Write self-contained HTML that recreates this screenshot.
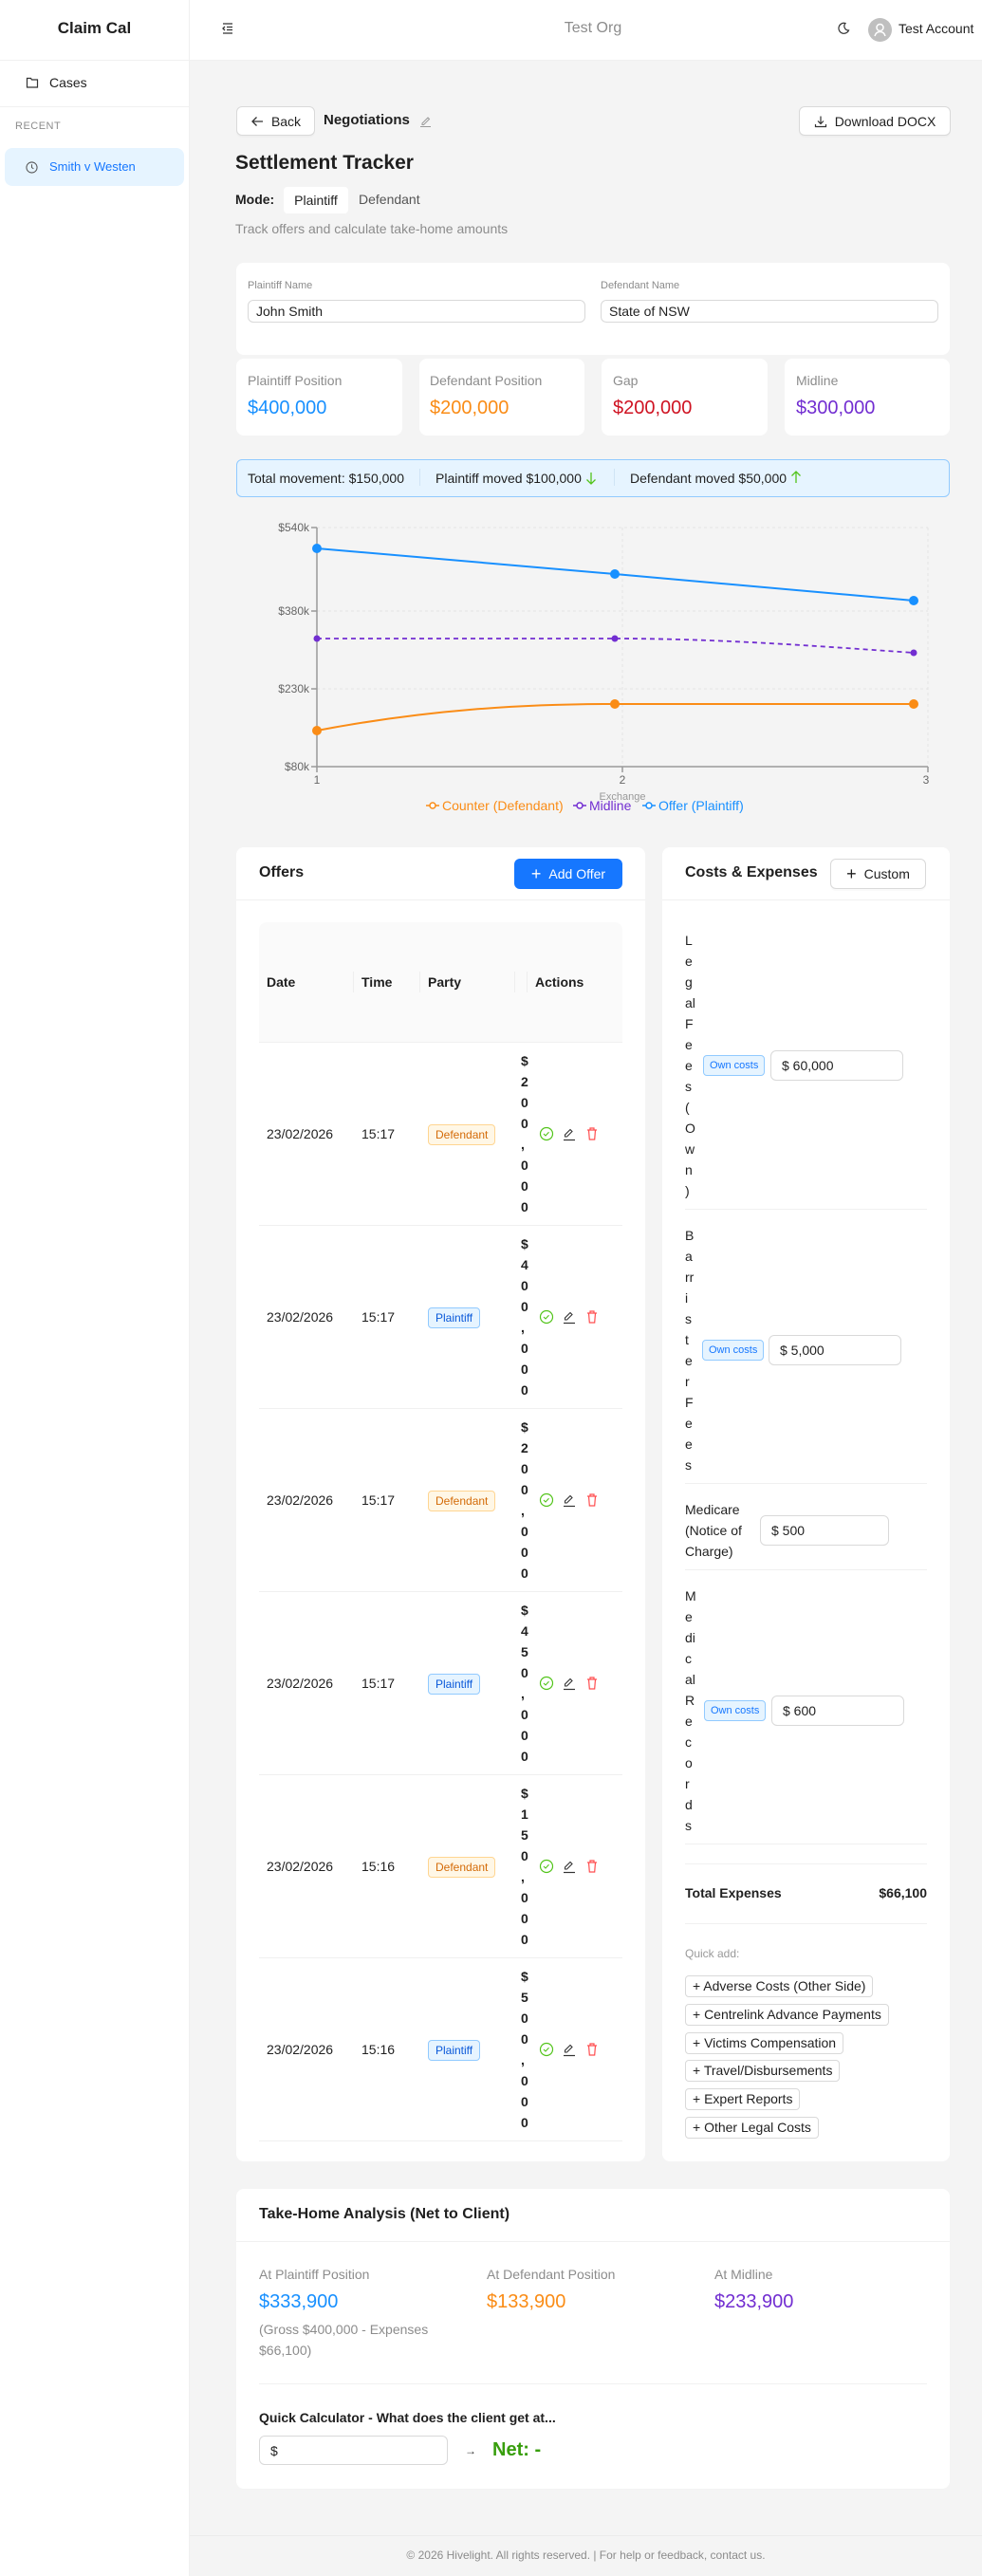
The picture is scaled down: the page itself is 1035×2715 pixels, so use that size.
<!DOCTYPE html>
<html><head><meta charset="utf-8"><style>
*{box-sizing:border-box;margin:0;padding:0}
html,body{width:1035px;height:2715px;overflow:hidden}
body{font-family:"Liberation Sans",Arial,sans-serif;background:#f4f4f4;color:#1f1f1f;position:relative;font-size:14px}
.a{position:absolute}
.card{position:absolute;background:#fff;border-radius:8px}
.btn{position:absolute;background:#fff;border:1px solid #d9d9d9;border-radius:6px;display:flex;align-items:center;justify-content:center;font-size:14px;color:#1f1f1f;box-shadow:0 2px 0 rgba(0,0,0,.02)}
.lbl{font-size:14px;color:#8c8c8c}
.inp{position:absolute;border:1px solid #d9d9d9;border-radius:6px;background:#fff;font-size:14px;display:flex;align-items:center;padding-left:11px}
.badge{position:absolute;font-size:12px;border-radius:4px;padding:0 7px;height:22px;line-height:20px}
.def{background:#fff7e6;border:1px solid #ffd591;color:#d46b08}
.pl{background:#e6f4ff;border:1px solid #91caff;color:#0958d9}
.own{font-size:11px;background:#e6f4ff;border:1px solid #91caff;color:#1677ff;border-radius:4px;height:22px;line-height:20px;padding:0 6px;position:absolute}
.amt{position:absolute;font-weight:bold;width:1px;word-break:break-all;line-height:22px;font-size:14px}
.vl{position:absolute;line-height:22px;font-size:14px;white-space:nowrap}
.hr{position:absolute;height:1px;background:#f0f0f0}
.qa{position:absolute;left:722px;height:23px;border:1px solid #d9d9d9;border-radius:4px;font-size:14px;line-height:21px;padding:0 7px;white-space:nowrap}
</style></head><body>
<div class="a" style="left:0;top:0;width:1035px;height:64px;background:#fff;border-bottom:1px solid #f0f0f0"></div>
<div class="a" style="left:199px;top:0;width:1px;height:2715px;background:#f0f0f0"></div>
<div class="a" style="left:0;top:64px;width:199px;height:2651px;background:#fff"></div>
<div class="a" style="left:0;top:20px;width:199px;text-align:center;font-weight:bold;font-size:17px">Claim Cal</div>
<svg class="a" style="left:233px;top:23px" width="14" height="14" viewBox="0 0 14 14" fill="none" stroke="#333" stroke-width="1.3"><path d="M2 2h10M6 5.5h6M6 8.5h6M2 12h10M4 5L2 7l2 2"/></svg>
<div class="a" style="left:560px;top:21px;width:130px;text-align:center;font-size:16px;color:#8c8c8c">Test Org</div>
<svg class="a" style="left:882px;top:23px" width="14" height="14" viewBox="0 0 14 14" fill="none" stroke="#333" stroke-width="1.2"><path d="M9 1.5A5.5 5.5 0 1 0 12.5 9 4.5 4.5 0 0 1 9 1.5z"/></svg>
<div class="a" style="left:915px;top:19px;width:25px;height:25px;border-radius:50%;background:#bfbfbf"></div>
<svg class="a" style="left:915px;top:19px" width="25" height="25" viewBox="0 0 25 25" fill="none" stroke="#fff" stroke-width="1.5"><circle cx="12.5" cy="10" r="3.5"/><path d="M7 19c1-3.5 3-4.5 5.5-4.5S17 15.5 18 19"/></svg>
<div class="a" style="left:947px;top:22px;font-size:14px">Test Account</div>
<svg class="a" style="left:27px;top:80px" width="14" height="14" viewBox="0 0 14 14" fill="none" stroke="#333" stroke-width="1.2"><path d="M1.5 2.5h4l1 1.5h6v8h-11z"/></svg>
<div class="a" style="left:52px;top:79px;font-size:14px">Cases</div>
<div class="a" style="left:0;top:112px;width:199px;height:1px;background:#f0f0f0"></div>
<div class="a" style="left:16px;top:127px;font-size:11px;color:#8c8c8c;letter-spacing:.5px">RECENT</div>
<div class="a" style="left:5px;top:156px;width:189px;height:40px;background:#e6f4ff;border-radius:8px"></div>
<svg class="a" style="left:27px;top:170px" width="13" height="13" viewBox="0 0 14 14" fill="none" stroke="#555" stroke-width="1.1"><circle cx="7" cy="7" r="6"/><path d="M7 3.5V7l2 1.5"/></svg>
<div class="a" style="left:52px;top:168px;font-size:13px;color:#1677ff">Smith v Westen</div>
<div class="btn" style="left:249px;top:112px;width:83px;height:31px"><svg width="14" height="14" viewBox="0 0 14 14" fill="none" stroke="#333" stroke-width="1.3" style="margin-right:8px"><path d="M13 7H2M6.5 2.5L2 7l4.5 4.5"/></svg>Back</div>
<div class="a" style="left:341px;top:118px;font-weight:bold;font-size:15px">Negotiations</div>
<svg class="a" style="left:442px;top:121px" width="13" height="13" viewBox="0 0 13 13" fill="none" stroke="#999" stroke-width="1"><path d="M3 9l6-6 1.5 1.5-6 6H3zM1 12.5h11"/></svg>
<div class="btn" style="left:842px;top:112px;width:160px;height:31px"><svg width="14" height="14" viewBox="0 0 14 14" fill="none" stroke="#333" stroke-width="1.2" style="margin-right:8px"><path d="M7 1.5v8M4 6.5l3 3 3-3M1.5 10v2.5h11V10"/></svg>Download DOCX</div>
<div class="a" style="left:248px;top:160px;font-weight:bold;font-size:21px">Settlement Tracker</div>
<div class="a" style="left:248px;top:202px;font-weight:bold;font-size:14px">Mode:</div>
<div class="a" style="left:299px;top:197px;width:68px;height:28px;background:#fff;border-radius:4px;text-align:center;line-height:28px;font-size:14px">Plaintiff</div>
<div class="a" style="left:378px;top:202px;font-size:14px;color:#555">Defendant</div>
<div class="a" style="left:248px;top:233px;font-size:14px;color:#8c8c8c">Track offers and calculate take-home amounts</div>
<div class="card" style="left:249px;top:277px;width:752px;height:97px"></div>
<div class="a" style="left:261px;top:295px;font-size:11px;color:#8c8c8c">Plaintiff Name</div>
<div class="a" style="left:633px;top:295px;font-size:11px;color:#8c8c8c">Defendant Name</div>
<div class="inp" style="left:261px;top:316px;width:356px;height:24px;padding-left:8px">John Smith</div>
<div class="inp" style="left:633px;top:316px;width:356px;height:24px;padding-left:8px">State of NSW</div>
<div class="card" style="left:249px;top:378px;width:175px;height:81px"></div>
<div class="card" style="left:442px;top:378px;width:174px;height:81px"></div>
<div class="card" style="left:634px;top:378px;width:175px;height:81px"></div>
<div class="card" style="left:827px;top:378px;width:174px;height:81px"></div>
<div class="a lbl" style="left:261px;top:393px">Plaintiff Position</div>
<div class="a lbl" style="left:453px;top:393px">Defendant Position</div>
<div class="a lbl" style="left:646px;top:393px">Gap</div>
<div class="a lbl" style="left:839px;top:393px">Midline</div>
<div class="a" style="left:261px;top:419px;font-size:20px;color:#1890ff">$400,000</div>
<div class="a" style="left:453px;top:419px;font-size:20px;color:#fa8c16">$200,000</div>
<div class="a" style="left:646px;top:419px;font-size:20px;color:#cf1322">$200,000</div>
<div class="a" style="left:839px;top:419px;font-size:20px;color:#722ed1">$300,000</div>
<div class="a" style="left:249px;top:484px;width:752px;height:40px;background:#e6f4ff;border:1px solid #91caff;border-radius:6px"></div>
<div class="a" style="left:261px;top:496px;font-size:14px">Total movement: $150,000</div>
<div class="a" style="left:442px;top:494px;width:1px;height:18px;background:#d0e4f5"></div>
<div class="a" style="left:459px;top:496px;font-size:14px">Plaintiff moved $100,000</div>
<svg class="a" style="left:617px;top:497px" width="12" height="14" viewBox="0 0 12 14" fill="none" stroke="#52c41a" stroke-width="1.3"><path d="M6 1v12M1.5 8.5L6 13l4.5-4.5"/></svg>
<div class="a" style="left:647px;top:494px;width:1px;height:18px;background:#d0e4f5"></div>
<div class="a" style="left:664px;top:496px;font-size:14px">Defendant moved $50,000</div>
<svg class="a" style="left:833px;top:496px" width="12" height="14" viewBox="0 0 12 14" fill="none" stroke="#52c41a" stroke-width="1.3"><path d="M6 13V1M1.5 5.5L6 1l4.5 4.5"/></svg>
<svg class="a" style="left:0;top:540px" width="1035" height="330" viewBox="0 540 1035 330" font-family="Liberation Sans, Arial, sans-serif">
<g stroke="#e3e3e3" stroke-dasharray="3 3" stroke-width="1"><path d="M334 556H978M334 644H978M334 726H978M656 556V808M978 556V808"/></g>
<g stroke="#999" stroke-width="1.5" fill="none"><path d="M334 556V808H978"/><path d="M328 556h6M328 644h6M328 726h6M328 808h6M334 808v6M656 808v6M978 808v6"/></g>
<g font-size="12" fill="#666" text-anchor="end"><text x="326" y="560">$540k</text><text x="326" y="648">$380k</text><text x="326" y="730">$230k</text><text x="326" y="812">$80k</text></g>
<g font-size="12" fill="#666" text-anchor="middle"><text x="334" y="826">1</text><text x="656" y="826">2</text><text x="976" y="826">3</text></g>
<text x="656" y="843" font-size="11" fill="#999" text-anchor="middle">Exchange</text>
<path d="M334 578L648 605L963 633" stroke="#1890ff" stroke-width="2" fill="none"/>
<g fill="#1890ff"><circle cx="334" cy="578" r="5"/><circle cx="648" cy="605" r="5"/><circle cx="963" cy="633" r="5"/></g>
<path d="M334 673L648 673C750 673 850 680 963 688" stroke="#722ed1" stroke-width="1.8" stroke-dasharray="5 4" fill="none"/>
<g fill="#722ed1"><circle cx="334" cy="673" r="3.5"/><circle cx="648" cy="673" r="3.5"/><circle cx="963" cy="688" r="3.5"/></g>
<path d="M334 770C450 748 550 742 648 742L963 742" stroke="#fa8c16" stroke-width="2" fill="none"/>
<g fill="#fa8c16"><circle cx="334" cy="770" r="5"/><circle cx="648" cy="742" r="5"/><circle cx="963" cy="742" r="5"/></g>
<g font-size="14">
<path d="M449 849h14" stroke="#fa8c16" stroke-width="1.5"/><circle cx="456" cy="849" r="3" fill="#fff" stroke="#fa8c16" stroke-width="1.5"/><text x="466" y="854" fill="#fa8c16">Counter (Defendant)</text>
<path d="M604 849h14" stroke="#722ed1" stroke-width="1.5"/><circle cx="611" cy="849" r="3" fill="#fff" stroke="#722ed1" stroke-width="1.5"/><text x="621" y="854" fill="#722ed1">Midline</text>
<path d="M677 849h14" stroke="#1890ff" stroke-width="1.5"/><circle cx="684" cy="849" r="3" fill="#fff" stroke="#1890ff" stroke-width="1.5"/><text x="694" y="854" fill="#1890ff">Offer (Plaintiff)</text>
</g>
</svg>
<div class="card" style="left:249px;top:893px;width:431px;height:1385px"></div>
<div class="a" style="left:249px;top:948px;width:431px;height:1px;background:#f0f0f0"></div>
<div class="a" style="left:273px;top:911px;font-weight:bold;font-size:16px">Offers</div>
<div class="a" style="left:542px;top:905px;width:114px;height:32px;background:#1677ff;border-radius:6px;color:#fff;font-size:14px;display:flex;align-items:center;justify-content:center"><span style="font-size:18px;margin-right:8px;line-height:1">+</span>Add Offer</div>
<div class="a" style="left:273px;top:972px;width:383px;height:127px;background:#fafafa;border-radius:8px 8px 0 0;border-bottom:1px solid #f0f0f0"></div>
<div class="a" style="left:281px;top:1027px;font-weight:bold">Date</div>
<div class="a" style="left:372px;top:1024px;width:1px;height:22px;background:#eee"></div>
<div class="a" style="left:381px;top:1027px;font-weight:bold">Time</div>
<div class="a" style="left:442px;top:1024px;width:1px;height:22px;background:#eee"></div>
<div class="a" style="left:451px;top:1027px;font-weight:bold">Party</div>
<div class="a" style="left:542px;top:1024px;width:1px;height:22px;background:#eee"></div>
<div class="a" style="left:555px;top:1024px;width:1px;height:22px;background:#eee"></div>
<div class="a" style="left:564px;top:1027px;font-weight:bold">Actions</div>
<div class="a" style="left:0;top:1099px">
 <div class="a" style="left:281px;top:88px;width:100px">23/02/2026</div><div class="a" style="left:381px;top:88px">15:17</div>
 <div class="badge def" style="left:451px;top:86px">Defendant</div>
 <div class="amt" style="left:549px;top:8px">$<br>2<br>0<br>0<br>,<br>0<br>0<br>0</div>
</div>
<div class="a" style="left:0;top:1292px">
 <div class="a" style="left:281px;top:88px;width:100px">23/02/2026</div><div class="a" style="left:381px;top:88px">15:17</div>
 <div class="badge pl" style="left:451px;top:86px">Plaintiff</div>
 <div class="amt" style="left:549px;top:8px">$<br>4<br>0<br>0<br>,<br>0<br>0<br>0</div>
</div>
<div class="a" style="left:0;top:1485px">
 <div class="a" style="left:281px;top:88px;width:100px">23/02/2026</div><div class="a" style="left:381px;top:88px">15:17</div>
 <div class="badge def" style="left:451px;top:86px">Defendant</div>
 <div class="amt" style="left:549px;top:8px">$<br>2<br>0<br>0<br>,<br>0<br>0<br>0</div>
</div>
<div class="a" style="left:0;top:1678px">
 <div class="a" style="left:281px;top:88px;width:100px">23/02/2026</div><div class="a" style="left:381px;top:88px">15:17</div>
 <div class="badge pl" style="left:451px;top:86px">Plaintiff</div>
 <div class="amt" style="left:549px;top:8px">$<br>4<br>5<br>0<br>,<br>0<br>0<br>0</div>
</div>
<div class="a" style="left:0;top:1871px">
 <div class="a" style="left:281px;top:88px;width:100px">23/02/2026</div><div class="a" style="left:381px;top:88px">15:16</div>
 <div class="badge def" style="left:451px;top:86px">Defendant</div>
 <div class="amt" style="left:549px;top:8px">$<br>1<br>5<br>0<br>,<br>0<br>0<br>0</div>
</div>
<div class="a" style="left:0;top:2064px">
 <div class="a" style="left:281px;top:88px;width:100px">23/02/2026</div><div class="a" style="left:381px;top:88px">15:16</div>
 <div class="badge pl" style="left:451px;top:86px">Plaintiff</div>
 <div class="amt" style="left:549px;top:8px">$<br>5<br>0<br>0<br>,<br>0<br>0<br>0</div>
</div>
<div class="hr" style="left:273px;top:1291px;width:383px"></div>
<div class="hr" style="left:273px;top:1484px;width:383px"></div>
<div class="hr" style="left:273px;top:1677px;width:383px"></div>
<div class="hr" style="left:273px;top:1870px;width:383px"></div>
<div class="hr" style="left:273px;top:2063px;width:383px"></div>
<div class="hr" style="left:273px;top:2256px;width:383px"></div>
<svg class="a" style="left:0;top:0" width="1035" height="2715">
<defs>
<g id="ic">
<circle cx="576" cy="0" r="6.5" fill="none" stroke="#52c41a" stroke-width="1.2"/><path d="M573 0l2 2 3.5-3.8" fill="none" stroke="#52c41a" stroke-width="1.1"/>
<path d="M595.5 3l0-2 5.5-5.5 2 2-5.5 5.5z" fill="none" stroke="#333" stroke-width="1.1"/><path d="M594 6.5h12" stroke="#333" stroke-width="1.2"/>
<path d="M619 -4h10M622 -4v-2h4v2M620.5 -4l.8 10h5.4l.8-10" fill="none" stroke="#ff4d4f" stroke-width="1.2"/>
</g>
<g id="tr"><path d="M0 -4h10M3 -4v-2h4v2M1.5 -4l.8 10h5.4l.8-10" fill="none" stroke="#ff4d4f" stroke-width="1.2"/></g>
</defs>
<use href="#ic" y="1195"/><use href="#ic" y="1388"/><use href="#ic" y="1581"/><use href="#ic" y="1774"/><use href="#ic" y="1967"/><use href="#ic" y="2160"/>
<use href="#tr" x="970" y="1123"/><use href="#tr" x="968" y="1422"/><use href="#tr" x="955" y="1613"/><use href="#tr" x="971" y="1802"/>
</svg>
<div class="card" style="left:698px;top:893px;width:303px;height:1385px"></div>
<div class="a" style="left:698px;top:948px;width:303px;height:1px;background:#f0f0f0"></div>
<div class="a" style="left:722px;top:911px;font-weight:bold;font-size:16px">Costs &amp; Expenses</div>
<div class="btn" style="left:875px;top:905px;width:101px;height:32px"><span style="font-size:18px;margin-right:8px;line-height:1">+</span>Custom</div>
<div class="vl" style="left:722px;top:980px">L<br>e<br>g<br>al<br>F<br>e<br>e<br>s<br>(<br>O<br>w<br>n<br>)</div>
<div class="own" style="left:741px;top:1112px">Own costs</div>
<div class="inp" style="left:812px;top:1107px;width:140px;height:32px">$ 60,000</div>
<div class="hr" style="left:722px;top:1274px;width:255px"></div>
<div class="vl" style="left:722px;top:1291px">B<br>a<br>rr<br>i<br>s<br>t<br>e<br>r<br>F<br>e<br>e<br>s</div>
<div class="own" style="left:740px;top:1412px">Own costs</div>
<div class="inp" style="left:810px;top:1407px;width:140px;height:32px">$ 5,000</div>
<div class="hr" style="left:722px;top:1563px;width:255px"></div>
<div class="vl" style="left:722px;top:1580px">Medicare<br>(Notice of<br>Charge)</div>
<div class="inp" style="left:801px;top:1597px;width:136px;height:32px">$ 500</div>
<div class="hr" style="left:722px;top:1654px;width:255px"></div>
<div class="vl" style="left:722px;top:1671px">M<br>e<br>di<br>c<br>al<br>R<br>e<br>c<br>o<br>r<br>d<br>s</div>
<div class="own" style="left:742px;top:1792px">Own costs</div>
<div class="inp" style="left:813px;top:1787px;width:140px;height:32px">$ 600</div>
<div class="hr" style="left:722px;top:1943px;width:255px"></div>
<div class="hr" style="left:722px;top:1964px;width:255px"></div>
<div class="a" style="left:722px;top:1987px;font-weight:bold;font-size:14px">Total Expenses</div>
<div class="a" style="left:900px;top:1987px;width:77px;text-align:right;font-weight:bold;font-size:14px">$66,100</div>
<div class="hr" style="left:722px;top:2027px;width:255px"></div>
<div class="a" style="left:722px;top:2052px;font-size:12px;color:#999">Quick add:</div>
<div class="qa" style="top:2082px">+ Adverse Costs (Other Side)</div>
<div class="qa" style="top:2112px">+ Centrelink Advance Payments</div>
<div class="qa" style="top:2142px">+ Victims Compensation</div>
<div class="qa" style="top:2171px">+ Travel/Disbursements</div>
<div class="qa" style="top:2201px">+ Expert Reports</div>
<div class="qa" style="top:2231px">+ Other Legal Costs</div>
<div class="card" style="left:249px;top:2307px;width:752px;height:316px"></div>
<div class="a" style="left:249px;top:2362px;width:752px;height:1px;background:#f0f0f0"></div>
<div class="a" style="left:273px;top:2325px;font-weight:bold;font-size:16px">Take-Home Analysis (Net to Client)</div>
<div class="a lbl" style="left:273px;top:2389px">At Plaintiff Position</div>
<div class="a lbl" style="left:513px;top:2389px">At Defendant Position</div>
<div class="a lbl" style="left:753px;top:2389px">At Midline</div>
<div class="a" style="left:273px;top:2415px;font-size:20px;color:#1890ff">$333,900</div>
<div class="a" style="left:513px;top:2415px;font-size:20px;color:#fa8c16">$133,900</div>
<div class="a" style="left:753px;top:2415px;font-size:20px;color:#722ed1">$233,900</div>
<div class="a" style="left:273px;top:2444px;width:200px;font-size:14px;line-height:22px;color:#8c8c8c">(Gross $400,000 - Expenses $66,100)</div>
<div class="hr" style="left:273px;top:2512px;width:704px"></div>
<div class="a" style="left:273px;top:2540px;font-weight:bold;font-size:14px">Quick Calculator - What does the client get at...</div>
<div class="inp" style="left:273px;top:2567px;width:199px;height:31px">$</div>
<div class="a" style="left:490px;top:2576px;font-size:12px;color:#333">&#8594;</div>
<div class="a" style="left:519px;top:2571px;font-weight:bold;font-size:20px;color:#389e0d">Net: -</div>
<div class="a" style="left:200px;top:2672px;width:835px;height:1px;background:#ebebeb"></div>
<div class="a" style="left:200px;top:2686px;width:835px;text-align:center;font-size:12px;color:#8c8c8c">© 2026 Hivelight. All rights reserved. | For help or feedback, contact us.</div>
</body></html>
